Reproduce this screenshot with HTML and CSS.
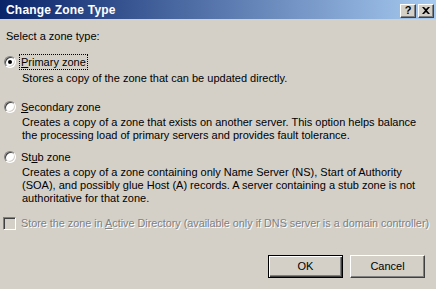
FILE: index.html
```html
<!DOCTYPE html>
<html>
<head>
<meta charset="utf-8">
<link rel="stylesheet" href="styles.css">
</head>
<body>
<div class="window">
  <div class="titlebar">
    <span class="title">Change Zone Type</span>
    <div class="caption-buttons">
      <span class="cap-btn help">?</span>
      <span class="cap-btn close">
        <svg width="8" height="7" viewBox="0 0 8 7"><path d="M0 0h2l2 2 2-2h2L5 3.5 8 7H6L4 5 2 7H0l3-3.5z" fill="#000"/></svg>
      </span>
    </div>
  </div>
  <div class="content">
    <div class="prompt">Select a zone type:</div>

    <div class="option first">
      <span class="radio checked"><span class="dot"></span></span>
      <span class="label focus"><u>P</u>rimary zone</span>
    </div>
    <div class="desc d-primary">Stores a copy of the zone that can be updated directly.</div>

    <div class="option second">
      <span class="radio"></span>
      <span class="label"><u>S</u>econdary zone</span>
    </div>
    <div class="desc d-secondary">Creates a copy of a zone that exists on another server. This option helps balance<br>the processing load of primary servers and provides fault tolerance.</div>

    <div class="option third">
      <span class="radio"></span>
      <span class="label">St<u>u</u>b zone</span>
    </div>
    <div class="desc d-stub">Creates a copy of a zone containing only Name Server (NS), Start of Authority<br>(SOA), and possibly glue Host (A) records. A server containing a stub zone is not<br>authoritative for that zone.</div>

    <div class="check-row">
      <span class="checkbox"></span>
      <span class="disabled-text">Store the zone in <u>A</u>ctive Directory (available only if DNS server is a domain controller)</span>
    </div>

    <div class="buttons">
      <div class="btn default"><span class="btn-inner">OK</span></div>
      <div class="btn"><span class="btn-inner">Cancel</span></div>
    </div>
  </div>
</div>
</body>
</html>
```

FILE: styles.css
```css
* { box-sizing: border-box; }
html, body {
  margin: 0;
  padding: 0;
  width: 436px;
  height: 289px;
  overflow: hidden;
  background: #d4d0c8;
  font-family: "Liberation Sans", Arial, sans-serif;
  font-size: 11px;
  line-height: 13px;
  color: #000;
}
.window {
  width: 436px;
  height: 289px;
  display: flex;
  flex-direction: column;
}
.titlebar {
  height: 19px;
  flex: none;
  display: flex;
  align-items: center;
  justify-content: space-between;
  padding: 0 2px 0 6px;
  background: linear-gradient(to right, #0a246a 0%, #a6caf0 100%);
}
.title {
  color: #fff;
  font-weight: bold;
  font-size: 12px;
  letter-spacing: 0.2px;
  position: relative;
  top: 1px;
}
.caption-buttons {
  display: flex;
  gap: 2px;
  margin-top: 2px;
}
.cap-btn {
  width: 16px;
  height: 14px;
  background: #d4d0c8;
  border-top: 1px solid #fff;
  border-left: 1px solid #fff;
  border-right: 1px solid #404040;
  border-bottom: 1px solid #404040;
  box-shadow: inset -1px -1px 0 #808080;
  display: flex;
  align-items: center;
  justify-content: center;
  font-weight: bold;
  font-size: 11px;
  line-height: 11px;
}
.cap-btn.help { padding-bottom: 1px; }
.content {
  flex: 1;
  display: flex;
  flex-direction: column;
  padding: 11px 11px 11px 0;
}
.prompt {
  padding-left: 6px;
}
.option {
  display: flex;
  align-items: center;
  height: 14px;
  padding-left: 4px;
}
.option.first { margin-top: 12px; }
.option.second { margin-top: 15px; }
.option.third { margin-top: 8px; }
.radio {
  width: 12px;
  height: 12px;
  border-radius: 50%;
  border: 1px solid;
  border-color: #808080 #fff #fff #808080;
  background: #fff;
  box-shadow: inset 1px 1px 0 #404040, inset -1px -1px 0 #d4d0c8;
  display: flex;
  align-items: center;
  justify-content: center;
  flex: none;
}
.dot {
  width: 4px;
  height: 4px;
  border-radius: 50%;
  background: #000;
}
.label {
  margin-left: 4px;
  padding: 0 1px;
  height: 14px;
  line-height: 14px;
}
.label.focus {
  outline: 1px dotted #000;
  outline-offset: 0;
}
.desc {
  padding-left: 22px;
  white-space: nowrap;
}
.d-primary { margin-top: 3px; }
.d-secondary { margin-top: 2px; }
.d-stub { margin-top: 2px; }
.check-row {
  display: flex;
  align-items: center;
  margin-top: 12px;
  padding-left: 3px;
  height: 13px;
}
.checkbox {
  width: 13px;
  height: 13px;
  flex: none;
  border: 1px solid;
  border-color: #808080 #fff #fff #808080;
  background: #d4d0c8;
  box-shadow: inset 1px 1px 0 #404040, inset -1px -1px 0 #d4d0c8;
}
.disabled-text {
  margin-left: 5px;
  color: #808080;
  text-shadow: 1px 1px 0 #fff;
  white-space: nowrap;
  font-size: 10.8px;
}
.buttons {
  margin-top: auto;
  display: flex;
  justify-content: flex-end;
  gap: 7px;
}
.btn {
  width: 75px;
  height: 23px;
  background: #d4d0c8;
  border-top: 1px solid #fff;
  border-left: 1px solid #fff;
  border-right: 1px solid #404040;
  border-bottom: 1px solid #404040;
  box-shadow: inset -1px -1px 0 #808080;
  display: flex;
  align-items: center;
  justify-content: center;
}
.btn.default {
  border: 1px solid #000;
  box-shadow: inset 1px 1px 0 #fff, inset -1px -1px 0 #404040, inset -2px -2px 0 #808080;
}
```
